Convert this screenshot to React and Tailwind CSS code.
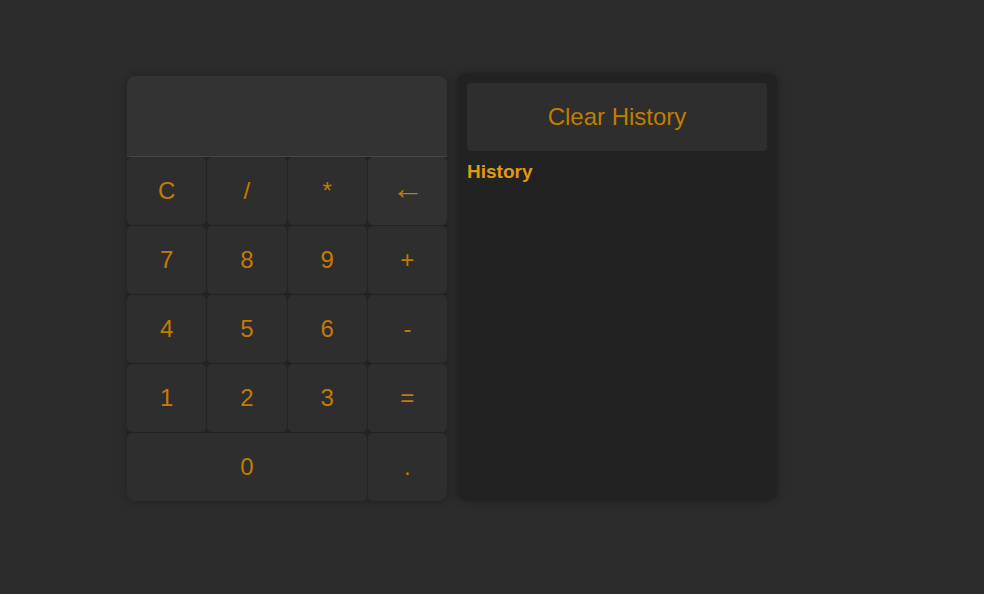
import React, { useState } from "react";

const keys = [
  ["C", "/", "*", "←"],
  ["7", "8", "9", "+"],
  ["4", "5", "6", "-"],
  ["1", "2", "3", "="],
];

const CalcButton = ({ label, wide, big }) => (
  <button
    className={`h-[68px] rounded-[5px] text-[#c27c00] flex items-center justify-center ${
      wide ? "col-span-3" : ""
    } ${big ? "bg-[#313131] text-[32px] pb-[6px]" : "bg-[#2e2e2e] text-[24px]"}`}
  >
    {label}
  </button>
);

export default function App() {
  const [history] = useState([]);

  return (
    <div
      className="min-h-[594px] w-full bg-[#2c2c2c] pl-[127px] pt-[73px]"
      style={{ fontFamily: '"Liberation Sans", Arial, sans-serif' }}
    >
      <div className="flex items-end gap-[10px]">
        {/* Calculator */}
        <div className="w-[320px] rounded-lg bg-[#232323] overflow-hidden shadow-[0_0_10px_rgba(0,0,0,0.25)]">
          <div className="h-[81px] bg-[#333333] border-b border-[#454545]" />
          <div className="grid grid-cols-4 gap-px">
            {keys.flat().map((k) => (
              <CalcButton key={k} label={k} big={k === "←"} />
            ))}
            <CalcButton label="0" wide />
            <CalcButton label="." />
          </div>
        </div>

        {/* History */}
        <div className="w-[320px] h-[428px] rounded-[10px] bg-[#222222] p-[10px] shadow-[0_0_10px_rgba(0,0,0,0.3)]">
          <button className="w-full h-[68px] rounded-[4px] bg-[#2e2e2e] text-[24px] text-[#c27c00]">
            Clear History
          </button>
          <h2 className="mt-[10px] text-[19px] font-bold text-[#e09a10] leading-[22px]">
            History
          </h2>
          <ul>
            {history.map((h, i) => (
              <li key={i}>{h}</li>
            ))}
          </ul>
        </div>
      </div>
    </div>
  );
}
